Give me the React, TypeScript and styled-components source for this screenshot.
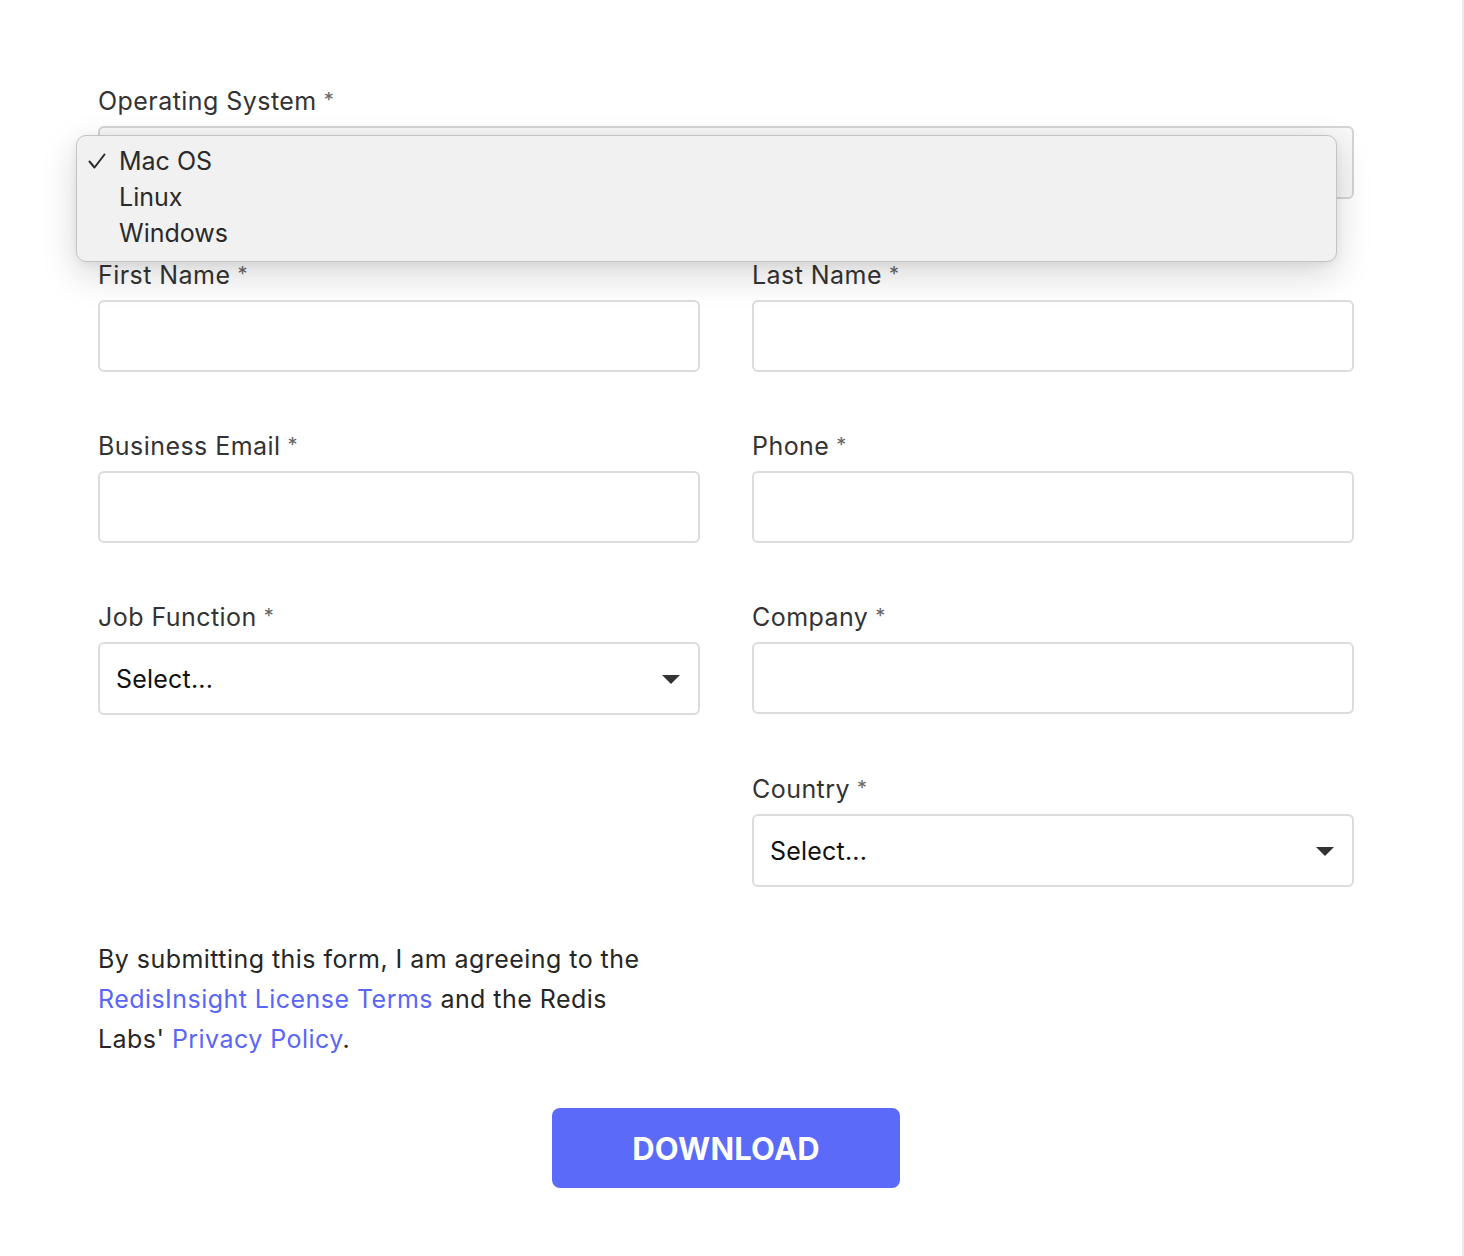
import React from "react";
import styled, { createGlobalStyle } from "styled-components";

const GlobalStyle = createGlobalStyle`
  html, body {
    margin: 0;
    padding: 0;
    background: #ffffff;
  }
  body {
    font-family: Inter, "Noto Sans", "Liberation Sans", sans-serif;
    -webkit-font-smoothing: antialiased;
  }
  * { box-sizing: border-box; }
`;

const Page = styled.div`
  width: 1464px;
  min-height: 1256px;
  border-right: 2px solid #ececec;
  padding: 85px 0 0 98px;
`;

const Form = styled.form`
  width: 1256px;
  display: grid;
  grid-template-columns: 602px 602px;
  column-gap: 52px;
  row-gap: 58px;
  align-items: start;
`;

const Field = styled.div<{ $full?: boolean; $col?: number }>`
  position: relative;
  display: flex;
  flex-direction: column;
  grid-column: ${(p) => (p.$full ? "1 / span 2" : p.$col ? `${p.$col}` : "auto")};
  margin-bottom: ${(p) => (p.$full ? "2px" : "0")};
`;

const Label = styled.label`
  font-size: 25px;
  line-height: 30px;
  color: #333333;
  margin-bottom: 10px;
  letter-spacing: 0.45px;
`;

const Star = styled.span`
  color: #666666;
  font-size: 20px;
  margin-left: 7px;
  vertical-align: 3px;
`;

const TextInput = styled.input`
  height: 72px;
  width: 100%;
  border: 2px solid #dcdcdc;
  border-radius: 6px;
  background: #ffffff;
  padding: 0 16px;
  font-size: 24px;
  outline: none;
`;

const SelectBox = styled.div<{ $muted?: boolean }>`
  height: 73px;
  width: 100%;
  border: 2px solid ${(p) => (p.$muted ? "#d4d4d4" : "#dcdcdc")};
  border-radius: 6px;
  background: ${(p) => (p.$muted ? "#f7f7f7" : "#ffffff")};
  display: flex;
  align-items: center;
  justify-content: space-between;
  padding: 0 18px 0 16px;
  font-size: 25px;
  letter-spacing: 0.2px;
  color: #111111;
`;

const Caret = styled.span`
  width: 0;
  height: 0;
  border-left: 9px solid transparent;
  border-right: 9px solid transparent;
  border-top: 9px solid #333333;
  margin-top: 2px;
`;

const Menu = styled.ul`
  position: absolute;
  left: -22px;
  top: 50px;
  width: 1261px;
  margin: 0;
  padding: 7px 0 10px;
  list-style: none;
  background: #f1f1f1;
  border: 1px solid #c3c3c3;
  border-radius: 10px;
  box-shadow: 0 12px 36px rgba(0, 0, 0, 0.16), 0 2px 8px rgba(0, 0, 0, 0.06);
  z-index: 10;
`;

const MenuItem = styled.li`
  display: flex;
  align-items: center;
  height: 36px;
  font-size: 25px;
  color: #2a2a2a;
`;

const CheckSlot = styled.span`
  width: 42px;
  padding-left: 11px;
  display: flex;
  align-items: center;
`;

const Legal = styled.p`
  grid-column: 1;
  max-width: 560px;
  margin: -6px 0 0;
  font-size: 25px;
  line-height: 40px;
  letter-spacing: 0.45px;
  color: #262626;
`;

const Link = styled.a`
  color: #5a66f6;
  text-decoration: none;
`;

const ButtonRow = styled.div`
  grid-column: 1 / span 2;
  display: flex;
  justify-content: center;
  margin-top: -9px;
`;

const Button = styled.button`
  width: 348px;
  height: 80px;
  border: none;
  border-radius: 8px;
  background: #5b6af8;
  color: #ffffff;
  font-family: Inter, "Noto Sans", sans-serif;
  font-weight: 700;
  font-size: 31px;
  letter-spacing: 0.2px;
`;

const Spacer = styled.div``;

const Req = ({ children }: { children: React.ReactNode }) => (
  <Label>
    {children}
    <Star>*</Star>
  </Label>
);

const CheckIcon = () => (
  <svg width="18" height="16" viewBox="0 0 18 16" fill="none">
    <polyline
      points="1.5,8.5 6.5,14.5 16.5,1.5"
      stroke="#2a2a2a"
      strokeWidth="2"
      strokeLinecap="round"
      strokeLinejoin="round"
    />
  </svg>
);

export default function App() {
  return (
    <>
      <GlobalStyle />
      <Page>
        <Form onSubmit={(e) => e.preventDefault()}>
          <Field $full>
            <Req>Operating System</Req>
            <SelectBox $muted />
            <Menu>
              <MenuItem>
                <CheckSlot>
                  <CheckIcon />
                </CheckSlot>
                Mac OS
              </MenuItem>
              <MenuItem>
                <CheckSlot />
                Linux
              </MenuItem>
              <MenuItem>
                <CheckSlot />
                Windows
              </MenuItem>
            </Menu>
          </Field>

          <Field>
            <Req>First Name</Req>
            <TextInput />
          </Field>
          <Field>
            <Req>Last Name</Req>
            <TextInput />
          </Field>

          <Field>
            <Req>Business Email</Req>
            <TextInput />
          </Field>
          <Field>
            <Req>Phone</Req>
            <TextInput />
          </Field>

          <Field>
            <Req>Job Function</Req>
            <SelectBox>
              Select...
              <Caret />
            </SelectBox>
          </Field>
          <Field>
            <Req>Company</Req>
            <TextInput />
          </Field>

          <Spacer />
          <Field $col={2}>
            <Req>Country</Req>
            <SelectBox>
              Select...
              <Caret />
            </SelectBox>
          </Field>

          <Legal>
            By submitting this form, I am agreeing to the{" "}
            <Link href="#">RedisInsight License Terms</Link> and the Redis Labs'{" "}
            <Link href="#">Privacy Policy</Link>.
          </Legal>

          <ButtonRow>
            <Button type="button">DOWNLOAD</Button>
          </ButtonRow>
        </Form>
      </Page>
    </>
  );
}
